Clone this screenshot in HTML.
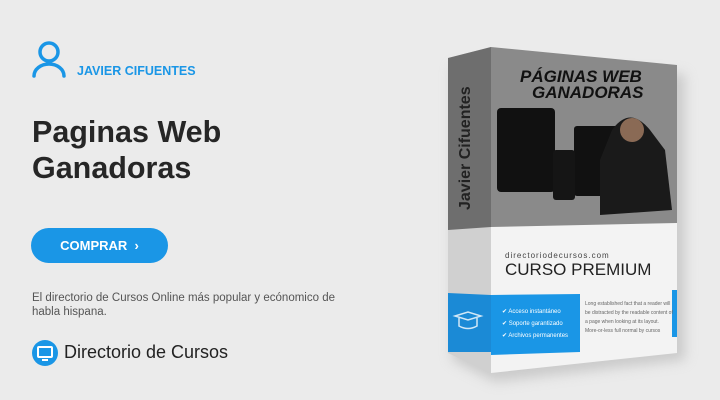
<html><head><style>
body{margin:0;width:720px;height:400px;background:#ebebeb;font-family:"Liberation Sans",sans-serif;position:relative;overflow:hidden}
.a{position:absolute}
</style></head><body>
<svg class="a" style="left:31px;top:40px" width="36" height="38" viewBox="0 0 36 38"><circle cx="18" cy="12" r="9" fill="none" stroke="#1a96e6" stroke-width="3.5"/><path d="M3 36 A15 12 0 0 1 33 36" fill="none" stroke="#1a96e6" stroke-width="3.5" stroke-linecap="round"/></svg>
<div class="a" style="left:77px;top:64px;color:#1a96e6;font-weight:bold;font-size:12.5px">JAVIER CIFUENTES</div>
<div class="a" style="left:32px;top:114px;color:#262626;font-weight:bold;font-size:30.5px;line-height:36px">Paginas Web<br>Ganadoras</div>
<div class="a" style="left:31px;top:228px;width:137px;height:35px;border-radius:18px;background:#1a96e6;color:#fff;font-weight:bold;font-size:13px;line-height:35px;text-align:center">COMPRAR&nbsp;&nbsp;›</div>
<div class="a" style="left:32px;top:291px;color:#555;font-size:11.5px;line-height:14px">El directorio de Cursos Online más popular y ecónomico de<br>habla hispana.</div>
<svg class="a" style="left:32px;top:340px" width="26" height="26"><circle cx="13" cy="13" r="13" fill="#1a96e6"/><rect x="6" y="7" width="14" height="10" rx="1" fill="none" stroke="#fff" stroke-width="2"/><rect x="10" y="19" width="6" height="2" fill="#fff"/></svg>
<div class="a" style="left:64px;top:342px;color:#222;font-size:18px">Directorio de Cursos</div>
<svg class="a" style="left:0;top:0" width="720" height="400">
<defs><filter id="s"><feGaussianBlur stdDeviation="6"/></filter></defs>
<polygon points="452,66 685,74 685,360 495,382 452,360" fill="#aaa" opacity=".5" filter="url(#s)"/>
<polygon points="448,58 491,47 491,373 448,353" fill="#d0d0d0"/>
<polygon points="448,58 491,47 491,227 448,230" fill="#6e6e6e"/>
<polygon points="448,293 491,295 491,352 448,352" fill="#1b8ad6"/>
<polygon points="491,47 677,65 677,353 491,373" fill="#f3f3f3"/>
<polygon points="491,47 677,65 677,223 491,227" fill="#8a8a8a"/>
<polygon points="491,295 580,294 580,352 491,355" fill="#1a96e6"/>
<rect x="672" y="290" width="5" height="47" fill="#1a96e6"/>
<rect x="497" y="108" width="58" height="84" rx="4" fill="#111"/>
<rect x="574" y="126" width="48" height="70" rx="3" fill="#111"/>
<rect x="553" y="150" width="22" height="50" rx="3" fill="#151515"/>
<path d="M612 130 Q630 105 650 130 L665 150 L672 210 L600 215 L600 160 Z" fill="#1a1a1a"/>
<circle cx="632" cy="130" r="12" fill="#8a6a55"/>
<text x="520" y="82" font-family="Liberation Sans" font-weight="bold" font-style="italic" font-size="17" fill="#111">PÁGINAS WEB</text>
<text x="532" y="98" font-family="Liberation Sans" font-weight="bold" font-style="italic" font-size="17" fill="#111">GANADORAS</text>
<text transform="translate(470,210) rotate(-90)" font-family="Liberation Sans" font-weight="bold" font-size="16" fill="#222">Javier Cifuentes</text>
<text x="505" y="258" font-family="Liberation Sans" font-size="8" fill="#444" letter-spacing="1">directoriodecursos.com</text>
<text x="505" y="275" font-family="Liberation Sans" font-size="17" fill="#222">CURSO PREMIUM</text>
<text x="502" y="313" font-family="Liberation Sans" font-size="6" fill="#fff">✔ Acceso instantáneo</text>
<text x="502" y="325" font-family="Liberation Sans" font-size="6" fill="#fff">✔ Soporte garantizado</text>
<text x="502" y="337" font-family="Liberation Sans" font-size="6" fill="#fff">✔ Archivos permanentes</text>
<g font-family="Liberation Sans" font-size="5" fill="#666"><text x="585" y="305">Long established fact that a reader will</text><text x="585" y="314">be distracted by the readable content of</text><text x="585" y="323">a page when looking at its layout.</text><text x="585" y="332">More-or-less full normal by cursos</text></g>
<path d="M455 316 L468 312 L481 316 L468 320 Z M459 318 V326 Q468 331 477 326 V318" fill="none" stroke="#fff" stroke-width="1.5" opacity=".8"/>
</svg>
</body></html>
